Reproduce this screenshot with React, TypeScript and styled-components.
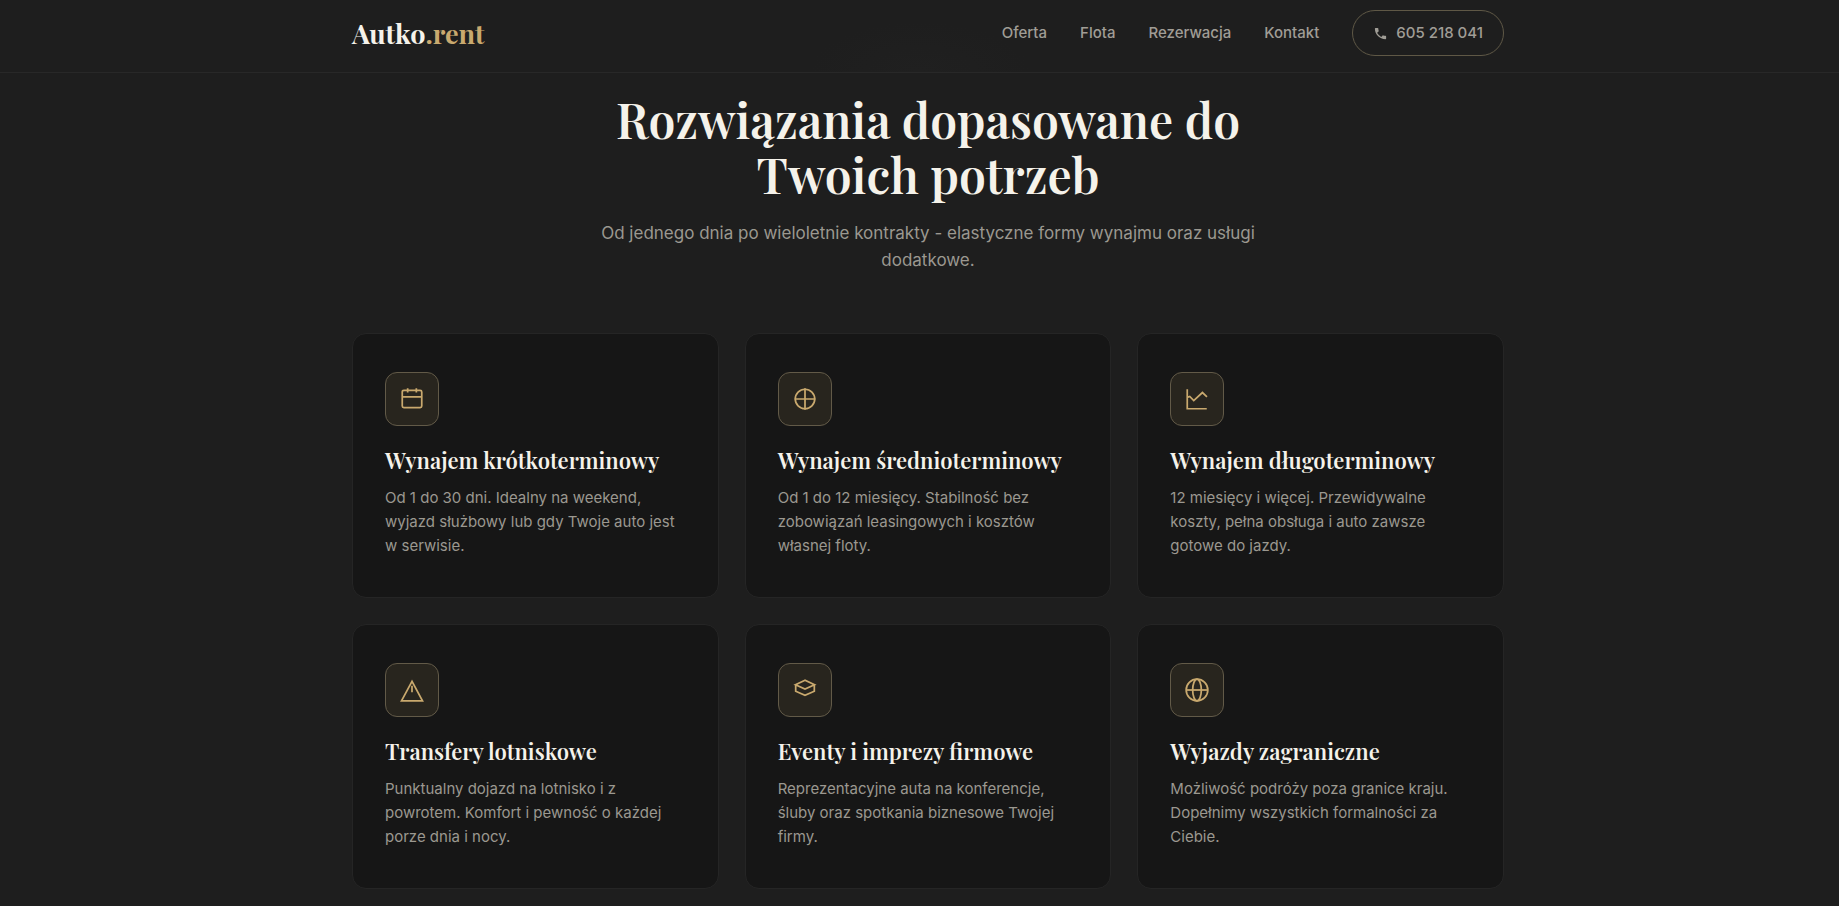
import React from "react";
import styled, { createGlobalStyle } from "styled-components";

const serif = `"Playfair Display", "Liberation Serif", "Times New Roman", serif`;
const sans = `Inter, "Liberation Sans", sans-serif`;

const GlobalStyle = createGlobalStyle`
  *, *::before, *::after { box-sizing: border-box; }
  body {
    margin: 0;
    background: #1e1e1e;
    color: #f5f2ea;
    font-family: ${sans};
    font-size: 15px;
  }
  h1, h2, h3, p, ul { margin: 0; padding: 0; }
  a { color: inherit; text-decoration: none; }
`;

const Page = styled.div`
  min-height: 100vh;
  overflow-x: hidden;
`;

const Header = styled.header`
  padding: 10px 24px 16px 41px;
  border-bottom: 1px solid #282828;
  background: radial-gradient(ellipse 110px 50px at 50% 100%, #202020, #1e1e1e);
`;

const HeaderInner = styled.div`
  display: flex;
  align-items: center;
  justify-content: space-between;
  max-width: 1152px;
  margin: 0 auto;
`;

const Logo = styled.a`
  font-family: ${serif};
  font-size: 27px;
  line-height: 34px;
  font-weight: 700;
`;

const LogoAccent = styled.span`
  color: #c9a96e;
`;

const Nav = styled.nav`
  display: flex;
  align-items: center;
  gap: 33px;
  color: #a09d96;
  font-weight: 500;
  line-height: 24px;
`;

const NavLink = styled.a`
  &:hover { color: #f5f2ea; }
`;

const PhoneLink = styled.a`
  display: flex;
  align-items: center;
  gap: 8px;
  padding: 10px 20px;
  border: 1px solid #5f5846;
  border-radius: 23px;
`;

const Section = styled.section`
  padding: 19px 24px 17px 41px;
`;

const Container = styled.div`
  max-width: 1152px;
  margin: 0 auto;
`;

const Intro = styled.div`
  max-width: 680px;
  margin: 0 auto 59px;
  text-align: center;
`;

const Title = styled.h2`
  font-family: ${serif};
  font-size: 48px;
  line-height: 55px;
  font-weight: 600;
`;

const Lead = styled.p`
  margin-top: 18px;
  color: #9b9890;
  font-size: 17px;
  line-height: 27px;
`;

const Grid = styled.div`
  display: grid;
  grid-template-columns: repeat(3, minmax(0, 1fr));
  gap: 26px;

  @media (max-width: 900px) {
    grid-template-columns: 1fr;
  }
`;

const Card = styled.article`
  padding: 38px 32px 39px;
  border: 1px solid #252525;
  border-radius: 14px;
  background: #161616;
`;

const IconTile = styled.div`
  display: grid;
  place-items: center;
  width: 54px;
  height: 54px;
  border: 1px solid #625a48;
  border-radius: 12px;
  background: #28251e;
  color: #c9a96e;
`;

const CardTitle = styled.h3`
  margin: 19px 0 11px;
  font-family: ${serif};
  font-size: 22px;
  line-height: 30px;
  font-weight: 600;
`;

const CardText = styled.p`
  color: #9b9890;
  font-size: 15px;
  line-height: 24px;
`;

const icons = {
  calendar: (
    <>
      <rect x="3" y="4" width="18" height="16" rx="1.5" />
      <path d="M3 10h18M8 2v4M16 2v4" />
    </>
  ),
  crosshair: (
    <>
      <circle cx="12" cy="12" r="9" />
      <path d="M12 2v20M2.5 12h19" />
    </>
  ),
  chart: <path d="M3 3v18h18M3 10.5l2.3-.8L9 13.5l8-7.5 4.2 4" />,
  triangle: <path d="M12 4L2.3 22h19.4zM12 8v6" />,
  box: <path d="M12 3L3.2 7.2l8.8 4 8.8-4zM3.4 7.2v6L12 17l8.6-3.800v-6" />,
  globe: (
    <>
      <circle cx="12" cy="12" r="10" />
      <ellipse cx="12" cy="12" rx="4" ry="10" />
      <path d="M2 12h20" />
    </>
  ),
};

type IconName = keyof typeof icons;

const services: { icon: IconName; title: string; text: string }[] = [
  {
    icon: "calendar",
    title: "Wynajem krótkoterminowy",
    text: "Od 1 do 30 dni. Idealny na weekend, wyjazd służbowy lub gdy Twoje auto jest w serwisie.",
  },
  {
    icon: "crosshair",
    title: "Wynajem średnioterminowy",
    text: "Od 1 do 12 miesięcy. Stabilność bez zobowiązań leasingowych i kosztów własnej floty.",
  },
  {
    icon: "chart",
    title: "Wynajem długoterminowy",
    text: "12 miesięcy i więcej. Przewidywalne koszty, pełna obsługa i auto zawsze gotowe do jazdy.",
  },
  {
    icon: "triangle",
    title: "Transfery lotniskowe",
    text: "Punktualny dojazd na lotnisko i z powrotem. Komfort i pewność o każdej porze dnia i nocy.",
  },
  {
    icon: "box",
    title: "Eventy i imprezy firmowe",
    text: "Reprezentacyjne auta na konferencje, śluby oraz spotkania biznesowe Twojej firmy.",
  },
  {
    icon: "globe",
    title: "Wyjazdy zagraniczne",
    text: "Możliwość podróży poza granice kraju. Dopełnimy wszystkich formalności za Ciebie.",
  },
];

function ServiceIcon({ name }: { name: IconName }) {
  return (
    <svg width="26" height="26" viewBox="0 0 24 24" fill="none" stroke="currentColor" strokeWidth="1.6" aria-hidden="true">
      {icons[name]}
    </svg>
  );
}

function PhoneIcon() {
  return (
    <svg width="15" height="15" viewBox="0 0 24 24" fill="currentColor" aria-hidden="true">
      <path d="M6.6 10.8c1.4 2.8 3.8 5.1 6.6 6.6l2.2-2.2c.3-.3.7-.4 1-.2 1.1.4 2.3.6 3.6.6.6 0 1 .4 1 1V20c0 .6-.4 1-1 1C10.6 21 3 13.4 3 4c0-.6.4-1 1-1h3.5c.6 0 1 .4 1 1 0 1.2.2 2.4.6 3.6.1.3 0 .7-.2 1z" />
    </svg>
  );
}

export default function App() {
  return (
    <Page>
      <GlobalStyle />
      <Header>
        <HeaderInner>
          <Logo href="#">
            Autko<LogoAccent>.rent</LogoAccent>
          </Logo>
          <Nav>
            <NavLink href="#oferta">Oferta</NavLink>
            <NavLink href="#flota">Flota</NavLink>
            <NavLink href="#rezerwacja">Rezerwacja</NavLink>
            <NavLink href="#kontakt">Kontakt</NavLink>
            <PhoneLink href="tel:605218041">
              <PhoneIcon />
              605 218 041
            </PhoneLink>
          </Nav>
        </HeaderInner>
      </Header>
      <main>
        <Section id="oferta">
          <Container>
            <Intro>
              <Title>Rozwiązania dopasowane do Twoich potrzeb</Title>
              <Lead>Od jednego dnia po wieloletnie kontrakty - elastyczne formy wynajmu oraz usługi dodatkowe.</Lead>
            </Intro>
            <Grid>
              {services.map((service) => (
                <Card key={service.title}>
                  <IconTile>
                    <ServiceIcon name={service.icon} />
                  </IconTile>
                  <CardTitle>{service.title}</CardTitle>
                  <CardText>{service.text}</CardText>
                </Card>
              ))}
            </Grid>
          </Container>
        </Section>
      </main>
    </Page>
  );
}
